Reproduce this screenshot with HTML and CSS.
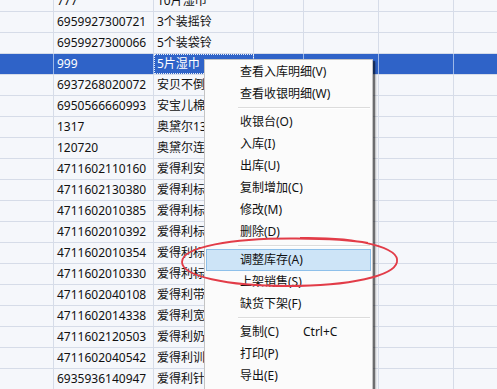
FILE: index.html
```html
<!DOCTYPE html>
<html>
<head>
<meta charset="utf-8">
<link rel="stylesheet" href="styles.css">
</head>
<body>
<div class="grid">
  <div class="row"><div class="c c1"></div><div class="c c2">777</div><div class="c c3">10片湿巾</div><div class="c c4"></div><div class="c c5"></div><div class="c c6"></div><div class="c c7"></div></div>
  <div class="row"><div class="c c1"></div><div class="c c2">6959927300721</div><div class="c c3">3个装摇铃</div><div class="c c4"></div><div class="c c5"></div><div class="c c6"></div><div class="c c7"></div></div>
  <div class="row"><div class="c c1"></div><div class="c c2">6959927300066</div><div class="c c3">5个装袋铃</div><div class="c c4"></div><div class="c c5"></div><div class="c c6"></div><div class="c c7"></div></div>
  <div class="row sel"><div class="c c1"></div><div class="c c2">999</div><div class="c c3 focus">5片湿巾</div><div class="c c4"></div><div class="c c5"></div><div class="c c6"></div><div class="c c7"></div></div>
  <div class="row"><div class="c c1"></div><div class="c c2">6937268020072</div><div class="c c3">安贝不倒翁</div><div class="c c4"></div><div class="c c5"></div><div class="c c6"></div><div class="c c7"></div></div>
  <div class="row"><div class="c c1"></div><div class="c c2">6950566660993</div><div class="c c3">安宝儿棉签</div><div class="c c4"></div><div class="c c5"></div><div class="c c6"></div><div class="c c7"></div></div>
  <div class="row"><div class="c c1"></div><div class="c c2">1317</div><div class="c c3">奥黛尔1317</div><div class="c c4"></div><div class="c c5"></div><div class="c c6"></div><div class="c c7"></div></div>
  <div class="row"><div class="c c1"></div><div class="c c2">120720</div><div class="c c3">奥黛尔连衣裙</div><div class="c c4"></div><div class="c c5"></div><div class="c c6"></div><div class="c c7"></div></div>
  <div class="row"><div class="c c1"></div><div class="c c2">4711602110160</div><div class="c c3">爱得利安抚</div><div class="c c4"></div><div class="c c5"></div><div class="c c6"></div><div class="c c7"></div></div>
  <div class="row"><div class="c c1"></div><div class="c c2">4711602130380</div><div class="c c3">爱得利标准</div><div class="c c4"></div><div class="c c5"></div><div class="c c6"></div><div class="c c7"></div></div>
  <div class="row"><div class="c c1"></div><div class="c c2">4711602010385</div><div class="c c3">爱得利标准</div><div class="c c4"></div><div class="c c5"></div><div class="c c6"></div><div class="c c7"></div></div>
  <div class="row"><div class="c c1"></div><div class="c c2">4711602010392</div><div class="c c3">爱得利标准</div><div class="c c4"></div><div class="c c5"></div><div class="c c6"></div><div class="c c7"></div></div>
  <div class="row"><div class="c c1"></div><div class="c c2">4711602010354</div><div class="c c3">爱得利标准</div><div class="c c4"></div><div class="c c5"></div><div class="c c6"></div><div class="c c7"></div></div>
  <div class="row"><div class="c c1"></div><div class="c c2">4711602010330</div><div class="c c3">爱得利标准</div><div class="c c4"></div><div class="c c5"></div><div class="c c6"></div><div class="c c7"></div></div>
  <div class="row"><div class="c c1"></div><div class="c c2">4711602040108</div><div class="c c3">爱得利带柄</div><div class="c c4"></div><div class="c c5"></div><div class="c c6"></div><div class="c c7"></div></div>
  <div class="row"><div class="c c1"></div><div class="c c2">4711602014338</div><div class="c c3">爱得利宽口</div><div class="c c4"></div><div class="c c5"></div><div class="c c6"></div><div class="c c7"></div></div>
  <div class="row"><div class="c c1"></div><div class="c c2">4711602120503</div><div class="c c3">爱得利奶瓶</div><div class="c c4"></div><div class="c c5"></div><div class="c c6"></div><div class="c c7"></div></div>
  <div class="row"><div class="c c1"></div><div class="c c2">4711602040542</div><div class="c c3">爱得利训练</div><div class="c c4"></div><div class="c c5"></div><div class="c c6"></div><div class="c c7"></div></div>
  <div class="row"><div class="c c1"></div><div class="c c2">6935936140947</div><div class="c c3">爱得利针筒</div><div class="c c4"></div><div class="c c5"></div><div class="c c6"></div><div class="c c7"></div></div>
</div>

<div class="menu">
  <div class="item">查看入库明细(V)</div>
  <div class="item">查看收银明细(W)</div>
  <div class="sep"></div>
  <div class="item">收银台(O)</div>
  <div class="item">入库(I)</div>
  <div class="item">出库(U)</div>
  <div class="item">复制增加(C)</div>
  <div class="item">修改(M)</div>
  <div class="item">删除(D)</div>
  <div class="sep"></div>
  <div class="item hot">调整库存(A)</div>
  <div class="item">上架销售(S)</div>
  <div class="item">缺货下架(F)</div>
  <div class="sep"></div>
  <div class="item"><span class="lbl">复制(C)</span><span class="key">Ctrl+C</span></div>
  <div class="item">打印(P)</div>
  <div class="item">导出(E)</div>
</div>

<svg class="mark" width="497" height="389" viewBox="0 0 497 389">
  <path d="M300 238 C 360 237, 400 248, 397 262 C 394 276, 350 286, 288 286 C 226 286, 182 276, 182 262 C 182 247, 232 238, 296 238.5 C 330 238.8, 352 240, 368 243" fill="none" stroke="#e23c48" stroke-width="1.8"/>
</svg>
</body>
</html>
```
FILE: styles.css
```css
html, body {
  margin: 0;
  padding: 0;
  width: 497px;
  height: 389px;
  overflow: hidden;
  background: #f5f7fb;
}
body {
  font-family: "Noto Sans", "Noto Sans CJK SC", sans-serif;
  font-size: 12px;
  color: #111;
  position: relative;
}
.grid {
  margin-top: -9px;
}
.row {
  display: flex;
  height: 21px;
  box-sizing: border-box;
  border-bottom: 1px solid #d6dce8;
}
.c {
  box-sizing: border-box;
  border-right: 1px solid #d6dce8;
  height: 20px;
  line-height: 20px;
  padding-left: 3px;
  white-space: nowrap;
  overflow: hidden;
}
.c1 { width: 54px; flex: none; }
.c2 { width: 100px; flex: none; }
.c3 { width: 100px; flex: none; }
.c4 { width: 50px; flex: none; }
.c5 { width: 75px; flex: none; }
.c6 { width: 75px; flex: none; }
.c7 { flex: 1; border-right: none; }
.row.sel {
  background: #2f63c8;
  color: #fff;
}
.row.sel .c {
  border-right-color: #9db8e8;
}
.focus {
  outline: 1px dotted #e8eef8;
  outline-offset: -1px;
}
.menu {
  position: absolute;
  left: 204px;
  top: 59px;
  width: 169px;
  box-sizing: border-box;
  background: #fbfbfb;
  border: 1px solid #c4c4c4;
  padding: 1px 1px 0 1px;
  height: 340px;
  box-shadow: 2px 2px 1px rgba(0,0,0,0.45), 3px 3px 2px rgba(0,0,0,0.2);
  font-family: "Noto Sans", "Noto Sans CJK SC", sans-serif;
  font-size: 12px;
  color: #111;
}
.item {
  height: 22px;
  line-height: 22px;
  padding-left: 34px;
  box-sizing: border-box;
  display: flex;
  white-space: nowrap;
}
.item.hot {
  background: #cde4f7;
  border: 1px solid #8ec0ea;
  padding-left: 33px;
  line-height: 20px;
  height: 22px;
}
.lbl { width: 63px; }
.key { }
.sep {
  height: 6px;
  margin-left: 32px;
  margin-right: 1px;
  position: relative;
}
.sep::after {
  content: "";
  position: absolute;
  left: 0;
  right: 0;
  top: 2px;
  border-top: 1px solid #dcdcdc;
  border-bottom: 1px solid #fff;
}
.mark {
  position: absolute;
  left: 0;
  top: 0;
  pointer-events: none;
}
```
